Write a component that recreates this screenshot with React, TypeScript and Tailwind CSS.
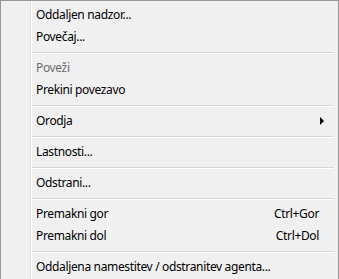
import React from "react";

type Item =
  | { kind: "item"; label: string; shortcut?: string; disabled?: boolean; submenu?: boolean }
  | { kind: "sep" };

const items: Item[] = [
  { kind: "item", label: "Oddaljen nadzor..." },
  { kind: "item", label: "Povečaj..." },
  { kind: "sep" },
  { kind: "item", label: "Poveži", disabled: true },
  { kind: "item", label: "Prekini povezavo" },
  { kind: "sep" },
  { kind: "item", label: "Orodja", submenu: true },
  { kind: "sep" },
  { kind: "item", label: "Lastnosti..." },
  { kind: "sep" },
  { kind: "item", label: "Odstrani..." },
  { kind: "sep" },
  { kind: "item", label: "Premakni gor", shortcut: "Ctrl+Gor" },
  { kind: "item", label: "Premakni dol", shortcut: "Ctrl+Dol" },
  { kind: "sep" },
  { kind: "item", label: "Oddaljena namestitev / odstranitev agenta..." },
];

export default function App() {
  return (
    <div className="w-[339px] h-[279px] overflow-hidden bg-white">
      <div
        className="relative w-[339px] h-[290px] bg-[#f0f0f0] border-l border-t border-r border-[#979797] pt-[3px] text-[12px] tracking-[-0.35px] text-black"
        style={{ fontFamily: '"Noto Sans", "Open Sans", sans-serif' }}
      >
        {/* icon gutter line */}
        <div className="absolute left-[29px] top-0 bottom-0 w-px bg-[#e0e0e0]" />
        <div className="absolute left-[30px] top-0 bottom-0 w-px bg-white" />

        {items.map((it, i) =>
          it.kind === "sep" ? (
            <div key={i} className="h-[9px] pl-[30px] pr-[4px] pt-[4px]">
              <div className="h-px bg-[#d7d7d7]" />
              <div className="h-px bg-white" />
            </div>
          ) : (
            <div key={i} className="relative h-[22px] flex items-center pl-[35px] pr-[19px]">
              <span className={it.disabled ? "text-[#6d6d6d] flex-1" : "flex-1"}>{it.label}</span>
              {it.shortcut && <span>{it.shortcut}</span>}
              {it.submenu && (
                <svg className="absolute right-[14px] top-[7px]" width="4" height="8" viewBox="0 0 4 8">
                  <path d="M0 0 L4 4 L0 8 Z" fill="#000" />
                </svg>
              )}
            </div>
          )
        )}
      </div>
    </div>
  );
}
